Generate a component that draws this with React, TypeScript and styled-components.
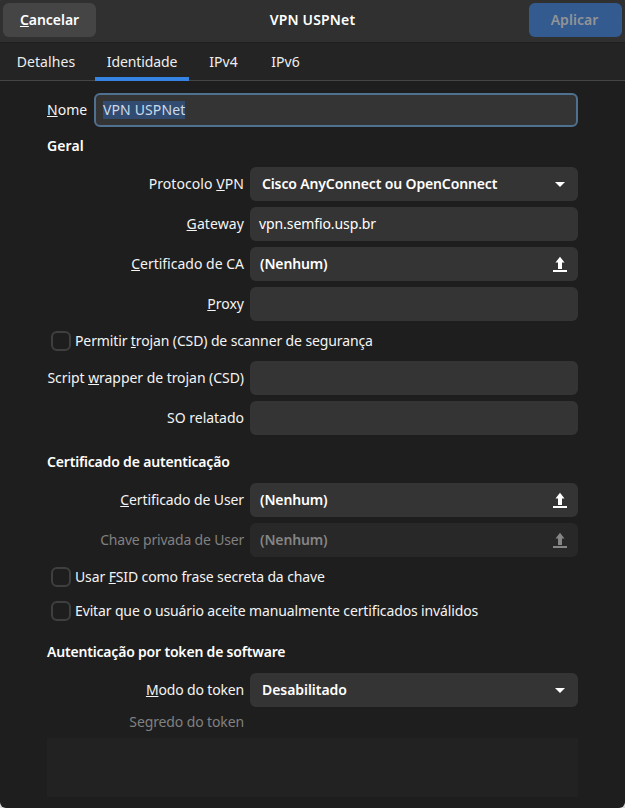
import React from "react";
import styled, { createGlobalStyle, css } from "styled-components";

const GlobalStyle = createGlobalStyle`
  * { box-sizing: border-box; }
  body {
    margin: 0;
    background: #dcdcdc;
    font-family: "Noto Sans", sans-serif;
    font-size: 14px;
    line-height: 20px;
    color: #f4f4f4;
  }
`;

const Dialog = styled.div`
  width: 625px;
  height: 808px;
  display: flex;
  flex-direction: column;
  background: #1e1e1e;
  border-radius: 1px 1px 6px 6px;
  overflow: hidden;
`;

/* Text run with a per-string tracking value */
const Text = styled.span<{ $track?: number; $bold?: boolean }>`
  white-space: nowrap;
  font-weight: ${(p) => (p.$bold ? 600 : 400)};
  letter-spacing: ${(p) => p.$track ?? -0.09}px;
`;

const Mnemonic = styled.span`
  text-decoration: underline;
  text-decoration-thickness: 1px;
  text-underline-offset: 1px;
  text-decoration-skip-ink: none;
`;

const HeaderBar = styled.header`
  height: 43px;
  flex: none;
  display: grid;
  grid-template-columns: 93px 1fr 93px;
  align-items: start;
  padding: 3px 3px 0;
  background: #303030;
  border-bottom: 1px solid #1f1f1f;
`;

const HeaderButton = styled.button<{ $suggested?: boolean }>`
  height: 34px;
  border: 0;
  padding: 0 0 1px;
  border-radius: 6px;
  font: inherit;
  color: #ffffff;
  background: #454545;
  ${(p) =>
    p.$suggested &&
    css`
      padding-right: 2px;
      color: #929496;
      background: #335b90;
    `}
`;

const Title = styled.div`
  height: 34px;
  display: flex;
  align-items: center;
  justify-content: center;
  padding-bottom: 1px;
  color: #ffffff;
`;

const TabBar = styled.nav`
  height: 38px;
  flex: none;
  display: flex;
  gap: 8px;
  padding-left: 5px;
  background: #242424;
  box-shadow: inset 0 -1px #454545;
`;

const Tab = styled.div<{ $active?: boolean; $width: number }>`
  width: ${(p) => p.$width}px;
  display: flex;
  justify-content: center;
  padding-top: 9px;
  color: #eeeeee;
  border-bottom: 4px solid ${(p) => (p.$active ? "#3584e4" : "transparent")};
`;

const Form = styled.main`
  flex: 1;
  display: flex;
  flex-direction: column;
  padding: 12px 47px 0;
`;

const NameRow = styled.div`
  display: flex;
  align-items: center;
  justify-content: space-between;
`;

const Fields = styled.div`
  display: flex;
  flex-direction: column;
  gap: 6px;
`;

const FieldRow = styled.div`
  display: grid;
  grid-template-columns: 197px 328px;
  column-gap: 6px;
  align-items: center;
`;

const Label = styled.label<{ $disabled?: boolean }>`
  display: flex;
  justify-content: flex-end;
  white-space: pre;
  color: ${(p) => (p.$disabled ? "#818181" : "#f4f4f4")};
`;

const Control = styled.div<{ $inset?: number; $disabled?: boolean }>`
  height: 34px;
  display: flex;
  align-items: center;
  justify-content: space-between;
  padding: 0 10px 0 ${(p) => p.$inset ?? 9}px;
  border-radius: 6px;
  background: ${(p) => (p.$disabled ? "#282828" : "#343434")};
  color: ${(p) => (p.$disabled ? "#858585" : "#ffffff")};
`;

const FocusedEntry = styled(Control)`
  width: 484px;
  padding: 0 7px;
  border: 2px solid #50708f;
`;

const Selection = styled.span`
  background: #314c70;
  color: #cbd9ea;
  height: 18px;
  line-height: 18px;
`;

const Section = styled.h2<{ $top: number; $bottom: number }>`
  margin: ${(p) => p.$top}px 0 ${(p) => p.$bottom}px;
  height: 20px;
  font-size: 14px;
  line-height: 20px;
  color: #ffffff;
`;

const CheckRow = styled.label<{ $top?: number; $bottom?: number }>`
  height: 20px;
  display: flex;
  align-items: center;
  gap: 4px;
  padding-left: 4px;
  margin: ${(p) => p.$top ?? 10}px 0 ${(p) => p.$bottom ?? 0}px;
`;

const Box = styled.span`
  width: 20px;
  height: 20px;
  flex: none;
  border: 2px solid #3f3f3f;
  border-radius: 6px;
`;

const Icon = styled.svg`
  width: 16px;
  height: 16px;
  flex: none;
  fill: currentColor;
`;

const SecretRow = styled.div`
  width: 197px;
  margin: 5px 0 6px;
`;

const SecretArea = styled.div`
  width: 531px;
  height: 59px;
  background: #222222;
`;

const Caret = () => (
  <Icon viewBox="0 0 16 16">
    <path d="M3 6h10L8 11z" />
  </Icon>
);

const Upload = () => (
  <Icon viewBox="0 0 16 16">
    <path d="M8 0.700 3.500 6.500H6V13h4V6.500h2.500zM1 14h14v2H1z" />
  </Icon>
);

const Ctl = ({ children, track }: { children: string; track?: number }) => (
  <Text $bold $track={track ?? -0.1}>{children}</Text>
);

export default function App() {
  return (
    <>
      <GlobalStyle />
      <Dialog>
        <HeaderBar>
          <HeaderButton>
            <Text $bold $track={-0.05}><Mnemonic>C</Mnemonic>ancelar</Text>
          </HeaderButton>
          <Title><Text $bold $track={0.15}>VPN USPNet</Text></Title>
          <HeaderButton $suggested><Text $bold $track={0.05}>Aplicar</Text></HeaderButton>
        </HeaderBar>
        <TabBar>
          <Tab $width={82}><Text $track={0.1}>Detalhes</Text></Tab>
          <Tab $width={94} $active><Text $track={-0.12}>Identidade</Text></Tab>
          <Tab $width={53}><Text $track={0.1}>IPv4</Text></Tab>
          <Tab $width={55}><Text $track={0.1}>IPv6</Text></Tab>
        </TabBar>
        <Form>
          <NameRow>
            <Label><Text $track={0.02}><Mnemonic>N</Mnemonic>ome</Text></Label>
            <FocusedEntry>
              <Selection><Text $track={0.12}>VPN USPNet</Text></Selection>
            </FocusedEntry>
          </NameRow>

          <Section $top={9} $bottom={11}><Text $bold $track={0.1}>Geral</Text></Section>
          <Fields>
            <FieldRow>
              <Label><Text $track={0.07}>Protocolo <Mnemonic>V</Mnemonic>PN</Text></Label>
              <Control $inset={12}><Ctl track={-0.14}>Cisco AnyConnect ou OpenConnect</Ctl><Caret /></Control>
            </FieldRow>
            <FieldRow>
              <Label><Text $track={0.1}><Mnemonic>G</Mnemonic>ateway</Text></Label>
              <Control><Text $track={-0.09}>vpn.semfio.usp.br</Text></Control>
            </FieldRow>
            <FieldRow>
              <Label><Text $track={0}><Mnemonic>C</Mnemonic>ertificado de CA</Text></Label>
              <Control $inset={10}><Ctl track={-0.14}>(Nenhum)</Ctl><Upload /></Control>
            </FieldRow>
            <FieldRow>
              <Label><Text $track={0}><Mnemonic>P</Mnemonic>roxy</Text></Label>
              <Control />
            </FieldRow>
          </Fields>
          <CheckRow $bottom={10}>
            <Box />
            <Text $track={-0.12}>Permitir <Mnemonic>t</Mnemonic>rojan (CSD) de scanner de segurança</Text>
          </CheckRow>
          <Fields>
            <FieldRow>
              <Label><Text $track={-0.05}>Script <Mnemonic>w</Mnemonic>rapper de trojan (CSD)</Text></Label>
              <Control />
            </FieldRow>
            <FieldRow>
              <Label><Text $track={-0.02}>SO relatado</Text></Label>
              <Control />
            </FieldRow>
          </Fields>

          <Section $top={17} $bottom={11}><Text $bold $track={-0.18}>Certificado de autenticação</Text></Section>
          <Fields>
            <FieldRow>
              <Label><Text $track={-0.1}><Mnemonic>C</Mnemonic>ertificado de User</Text></Label>
              <Control $inset={10}><Ctl track={-0.14}>(Nenhum)</Ctl><Upload /></Control>
            </FieldRow>
            <FieldRow>
              <Label $disabled><Text $track={-0.19}>Chave privada de User</Text></Label>
              <Control $inset={10} $disabled><Ctl track={-0.14}>(Nenhum)</Ctl><Upload /></Control>
            </FieldRow>
          </Fields>
          <CheckRow>
            <Box />
            <Text $track={-0.12}>Usar <Mnemonic>F</Mnemonic>SID como frase secreta da chave</Text>
          </CheckRow>
          <CheckRow $top={14}>
            <Box />
            <Text $track={-0.135}>Evitar que o usuário aceite manualmente certificados inválidos</Text>
          </CheckRow>

          <Section $top={21} $bottom={11}><Text $bold $track={-0.19}>Autenticação por token de software</Text></Section>
          <FieldRow>
            <Label><Text $track={-0.16}><Mnemonic>M</Mnemonic>odo do token</Text></Label>
            <Control $inset={12}><Ctl track={-0.05}>Desabilitado</Ctl><Caret /></Control>
          </FieldRow>
          <SecretRow><Label $disabled><Text $track={-0.12}>Segredo do token</Text></Label></SecretRow>
          <SecretArea />
        </Form>
      </Dialog>
    </>
  );
}
